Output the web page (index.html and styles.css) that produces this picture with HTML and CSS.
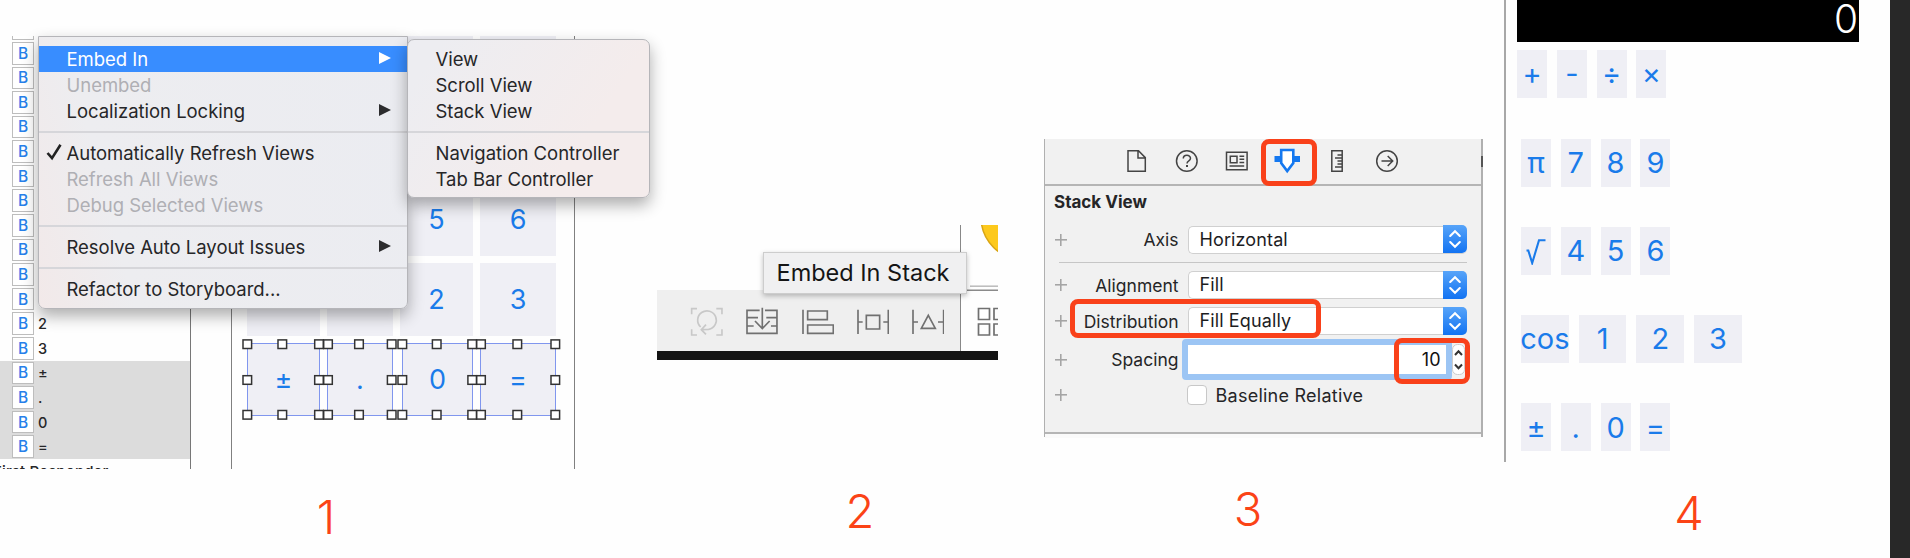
FILE: index.html
```html
<!DOCTYPE html>
<html lang="en">
<head>
<meta charset="utf-8">
<title>Embed In Stack View</title>
<link rel="stylesheet" href="styles.css">
</head>
<body>
<main class="page">
  <section class="step step-one">
    <div class="editor">
      <ul class="outline">
        <li><i>B</i></li><li><i>B</i></li><li><i>B</i></li><li><i>B</i></li><li><i>B</i></li><li><i>B</i></li>
        <li><i>B</i></li><li><i>B</i></li><li><i>B</i></li><li><i>B</i></li><li><i>B</i></li><li><i>B</i></li>
        <li><i>B</i>2</li><li><i>B</i>3</li>
        <li class="picked"><i>B</i>±</li><li class="picked"><i>B</i>.</li><li class="picked"><i>B</i>0</li><li class="picked"><i>B</i>=</li>
        <li class="responder">First Responder</li>
      </ul>
      <div class="canvas">
        <div class="pad">
          <b></b><b></b><b></b><b></b>
          <b></b><b></b><b></b><b></b>
          <b></b><b></b><b>5</b><b>6</b>
          <b>cos</b><b>1</b><b>2</b><b>3</b>
        </div>
        <div class="selection">
          <b class="sel-a">±</b><b class="sel-b">.</b><b class="sel-c">0</b><b class="sel-d">=</b>
          <svg class="handles" width="320" height="84" viewBox="241 338 320 84">
            <defs><rect id="h" x="-4.3" y="-4.3" width="8.6" height="8.6" fill="#fff" stroke="#333" stroke-width="1.5"/>
            <g id="row"><use href="#h" x="247.3"/><use href="#h" x="282.3"/><use href="#h" x="319"/><use href="#h" x="328"/><use href="#h" x="359"/><use href="#h" x="391.7"/><use href="#h" x="402.3"/><use href="#h" x="436.7"/><use href="#h" x="472.2"/><use href="#h" x="481"/><use href="#h" x="517.3"/><use href="#h" x="555.3"/></g>
            <g id="mid"><use href="#h" x="247.3"/><use href="#h" x="319"/><use href="#h" x="328"/><use href="#h" x="391.7"/><use href="#h" x="402.3"/><use href="#h" x="472.2"/><use href="#h" x="481"/><use href="#h" x="555.3"/></g></defs>
            <use href="#row" y="344.2"/><use href="#mid" y="380"/><use href="#row" y="414.8"/>
          </svg>
        </div>
      </div>
      <div class="menu">
        <p class="active">Embed In<em></em></p>
        <p class="off">Unembed</p>
        <p>Localization Locking<em></em></p>
        <hr>
        <p><svg class="check" width="17" height="18" viewBox="0 0 17 18"><path d="M1.5 10 6 15.2 14.5 1.8" fill="none" stroke="#222" stroke-width="2.6"/></svg>Automatically Refresh Views</p>
        <p class="off">Refresh All Views</p>
        <p class="off">Debug Selected Views</p>
        <hr>
        <p>Resolve Auto Layout Issues<em></em></p>
        <hr>
        <p>Refactor to Storyboard...</p>
      </div>
      <div class="menu submenu">
        <p>View</p><p>Scroll View</p><p>Stack View</p>
        <hr>
        <p>Navigation Controller</p><p>Tab Bar Controller</p>
      </div>
    </div>
    <div class="number n1">1</div>
  </section>

  <section class="step step-two">
    <div class="dock">
      <div class="dock-left">
        <div class="tools">
          <svg viewBox="150 290 100 90"><g fill="none" stroke="#c8c8c8" stroke-width="5"><path d="M155 312V295H171M229 295H246V312M155 357V374H171M229 374H246V357"/><path d="M182 350A28 28 0 1 1 206 357L184 358M198 343 184 358 198 372"/></g></svg>
          <svg viewBox="316 290 100 90"><g fill="none" stroke="#707070" stroke-width="5"><path d="M360 300H322V369H412V300H376M322 322H355M380 322H412M322 347H342M394 347H412M368 292V353M346 332 368 355 390 332"/></g></svg>
          <svg viewBox="482 290 100 90"><g fill="none" stroke="#707070" stroke-width="5"><path d="M488 298V371M502 302H561V328H502ZM502 344H579V369H502Z"/></g></svg>
          <svg viewBox="648 290 100 90"><g fill="none" stroke="#707070" stroke-width="5"><path d="M654 298V371M745 298V371M654 335H668M730 335H745M679 315H719V356H679Z"/></g></svg>
          <svg viewBox="814 290 100 90"><g fill="none" stroke="#707070" stroke-width="5"><path d="M820 298V371M912 298V371M820 335H835M895 335H912M866 315 887 354H845Z"/></g></svg>
        </div>
      </div>
      <div class="dock-right">
        <svg width="37" height="126" viewBox="961 225 37 126">
          <circle cx="1024" cy="217" r="43" fill="#fdc91c" stroke="#d9a514" stroke-width="1.5"/>
          <path d="M970 286.2H998" stroke="#bbb" stroke-width="1.5"/><path d="M961 290.3H998" stroke="#8a8a8a" stroke-width="1.5"/>
          <path d="M978.5 308.5h11v11h-11zM994 308.5h11v11h-11zM978.5 324h11v11h-11zM994 324h11v11h-11z" fill="none" stroke="#707070" stroke-width="1.7"/>
        </svg>
      </div>
      <div class="tip">Embed In Stack</div>
    </div>
    <div class="number n2">2</div>
  </section>

  <section class="step step-three">
    <div class="inspector">
      <div class="tabs">
        <svg viewBox="0 0 26 26"><path d="M4 2.8H14.5L21.3 9.6V23.2H4ZM14 3V10H21" fill="none" stroke="#444" stroke-width="1.5"/></svg>
        <svg viewBox="0 0 26 26"><g fill="none" stroke="#444" stroke-width="1.5"><circle cx="12.8" cy="13" r="10.3"/><path d="M9.3 10.5C9.3 6.3 16.5 6.3 16.5 10.3 16.5 13 13 12.6 13 15.5"/><path d="M13 17V19" stroke-width="2"/></g></svg>
        <svg viewBox="0 0 26 26"><path d="M2.5 4.3H23.1V21.7H2.5ZM6.3 8.3H13V14.7H6.3ZM15.5 8.3H20.2M15.5 11.3H20.2M15.5 14.5H20.2M5.5 18H20.2" fill="none" stroke="#444" stroke-width="1.5"/></svg>
        <svg viewBox="0 0 26 26"><path d="M7.2 2H19.3V15L13.2 23 7.2 15Z" fill="#fff" stroke="#1478f0" stroke-width="2.6"/><path d="M.5 8H6.5V14H.5ZM20 8H26V14H20Z" fill="#1478f0"/></svg>
        <svg viewBox="0 0 26 26"><path d="M7.8 2.8H18.2V23.2H7.8ZM13.5 7H18M11 10H18M13.5 13H18M13.5 16H18M11 19H18" fill="none" stroke="#444" stroke-width="1.5"/></svg>
        <svg viewBox="0 0 26 26"><g fill="none" stroke="#444" stroke-width="1.5"><circle cx="13" cy="13" r="10.3"/><path d="M7.5 13H18.5M13.7 8 18.7 13 13.7 18"/></g></svg>
      </div>
      <h2>Stack View</h2>
      <div class="row axis"><s></s><label>Axis</label><div class="select">Horizontal<svg viewBox="0 0 24 28"><path d="M7.2 11 12 6.3 16.8 11M7.2 17 12 21.7 16.8 17"/></svg></div></div>
      <div class="rule"></div>
      <div class="row alignment"><s></s><label>Alignment</label><div class="select">Fill<svg viewBox="0 0 24 28"><path d="M7.2 11 12 6.3 16.8 11M7.2 17 12 21.7 16.8 17"/></svg></div></div>
      <div class="row distribution"><s></s><label>Distribution</label><div class="select">Fill Equally<svg viewBox="0 0 24 28"><path d="M7.2 11 12 6.3 16.8 11M7.2 17 12 21.7 16.8 17"/></svg></div></div>
      <div class="row spacing"><s></s><label>Spacing</label><div class="field">10</div><svg class="stepper" viewBox="0 0 13 32"><rect x=".5" y=".5" width="12" height="30" rx="5" fill="#fff" stroke="#ccc"/><path d="M3 11 6.5 7.2 10 11M3 20.5 6.5 24.3 10 20.5" fill="none" stroke="#333" stroke-width="2"/></svg></div>
      <div class="row relative"><s></s><label></label><span class="box"></span><span class="opt">Baseline Relative</span></div>
      <div class="mark m-tab"></div><div class="mark m-dist"></div><div class="mark m-space"></div>
      <div class="speck"></div>
    </div>
    <div class="number n3">3</div>
  </section>

  <section class="step step-four">
    <div class="phone">
      <div class="display">0</div>
      <div class="keys first"><b>+</b><b>-</b><b>÷</b><b>×</b></div>
      <div class="keys"><b>π</b><b>7</b><b>8</b><b>9</b></div>
      <div class="keys"><b><svg width="22" height="28" viewBox="0 0 22 28"><path d="M1.5 13.5H3.3L7.2 26 14 3.2H20.5" fill="none" stroke="#1a7bea" stroke-width="2.1"/></svg></b><b>4</b><b>5</b><b>6</b></div>
      <div class="keys wide"><b>cos</b><b>1</b><b>2</b><b>3</b></div>
      <div class="keys"><b>±</b><b>.</b><b>0</b><b>=</b></div>
    </div>
    <div class="number n4">4</div>
  </section>
  <aside class="edge"></aside>
</main>
</body>
</html>
```
FILE: styles.css
```css
* { box-sizing: border-box; }
body { margin: 0; background: #fefefe; font-family: Inter, "Liberation Sans", sans-serif; color: #262628; }
.page { display: flex; width: 1910px; height: 558px; overflow: hidden; }
.step { flex: none; height: 558px; }
.number { color: #fb4316; font-size: 47px; line-height: 48px; font-weight: 350; text-align: center; }

/* Step one: outline, canvas and context menus */
.step-one { width: 657px; padding-top: 36px; }
.editor { position: relative; display: flex; gap: 40px; height: 433px; }
.outline { width: 191px; margin: 0; padding: 0; list-style: none; border-right: 1.5px solid #777; overflow: hidden; font-size: 14.5px; font-weight: 500; }
.outline li { display: flex; align-items: center; gap: 4px; height: 24.6px; padding-left: 12px; }
.outline li:first-child { margin-top: -19.7px; }
.outline i { display: flex; align-items: center; justify-content: center; width: 22px; height: 22.6px; border: 1.3px solid #bdbdbd; background: #fff; color: #2680ea; font-style: normal; font-weight: 500; font-size: 15.5px; }
.outline .picked { background: #dcdcdc; }
.outline .responder { padding-left: 0; margin-left: -7px; height: 24px; font-size: 15px; letter-spacing: .15px; white-space: nowrap; }
.canvas { width: 344px; border: solid #808080; border-width: 0 1.3px; overflow: hidden; }
.pad { display: grid; grid-template-columns: 73px 66px 73px 76px; grid-auto-rows: 73px; gap: 7px; margin: -13px 0 0 15px; }
.pad b, .selection b, .keys b { display: flex; align-items: center; justify-content: center; background: #efeff5; color: #1a7bea; font-weight: 400; font-size: 27px; }
.selection { position: relative; display: flex; margin: 7px 0 0 15px; height: 73px; }
.selection b { border: 1.3px solid #8096ee; }
.sel-a { width: 73px; margin-right: 7px; }
.sel-b { width: 66px; margin-right: 9px; }
.sel-c { width: 71px; margin-right: 7px; }
.sel-d { width: 76px; }
.handles { position: absolute; left: -6px; top: -5px; }
.menu { position: absolute; left: 38px; top: 0; width: 370px; height: 273px; padding-top: 8.5px; border: solid #b5b5b9; border-width: 1px; border-radius: 0 0 7px 7px; background: linear-gradient(75deg, #f2e9e9 0, #ededf0 22%, #ebecf1 100%); box-shadow: 0 7px 16px rgba(0,0,0,.32); font-size: 18.5px; letter-spacing: -.03px; }
.menu p { position: relative; display: flex; align-items: center; height: 26px; margin: 0; padding-left: 27.5px; white-space: nowrap; }
.menu hr { height: 2px; margin: 7px 0 7.2px; border: 0; background: #d6d6da; }
.menu .off { color: #afafb4; }
.menu .active { background: #388dff; color: #fff; }
.menu em { position: absolute; right: 16px; top: 6.5px; border: solid transparent; border-width: 6.5px 0 6.5px 12.5px; border-left-color: #2c2c2e; }
.menu .active em { border-left-color: #fff; }
.check { position: absolute; left: 7px; top: 3px; }
.submenu { left: 407px; top: 3px; width: 243px; height: 159px; padding-top: 5.5px; border-radius: 7px; background: linear-gradient(125deg, #ededf1 10%, #f4ecec 70%); }

/* Step two: canvas toolbar */
.step-two { width: 387px; padding-top: 225px; }
.dock { position: relative; display: flex; width: 341px; height: 135px; border-bottom: 9px solid #141414; }
.dock-left { display: flex; width: 304px; padding-top: 65px; border-right: 1.5px solid #888; }
.tools { display: flex; gap: 22px; width: 303px; padding: 16.7px 0 0 33px; background: #efefef; }
.tools svg { flex: none; width: 33.3px; height: 30px; }
.dock-right { width: 37px; }
.dock-right svg { display: block; }
.tip { position: absolute; left: 106px; top: 27px; width: 204px; height: 42px; padding-left: 12.5px; line-height: 39px; background: #f0f0f1; border: 1px solid #cdcdcd; box-shadow: 0 2px 5px rgba(0,0,0,.25); font-size: 23.5px; color: #151515; white-space: nowrap; }

/* Step three: attributes inspector */
.step-three { width: 460px; padding-top: 139px; }
.inspector { position: relative; width: 439px; height: 298px; background: #f1f1f1; border: solid #b0b0b0; border-width: 0 2px 0 1.5px; font-size: 17.5px; color: #252527; }
.inspector::after { content: ""; display: block; height: 4px; border-top: 2px solid #b5b5b5; background: #fafafa; margin-top: 27px; }
.tabs { display: flex; gap: 24.2px; height: 47px; padding: 9px 0 0 78.5px; border-bottom: 2px solid #b5b5b5; }
.tabs svg { flex: none; width: 26px; height: 26px; }
h2 { margin: 5px 0 11.5px 9px; height: 23px; line-height: 23px; font-size: 17px; font-weight: 700; }
.row { display: flex; align-items: center; height: 28px; padding-left: 10px; }
.row s { flex: none; width: 12px; height: 12px; background: linear-gradient(#a5a5a5,#a5a5a5) center/12px 1.6px no-repeat, linear-gradient(#a5a5a5,#a5a5a5) center/1.6px 12px no-repeat; }
.row label { width: 111.5px; text-align: right; margin-right: 9px; white-space: nowrap; }
.select { display: flex; align-items: center; justify-content: space-between; width: 279px; height: 28px; padding: 0 0 1px 11px; background: #fff; border: 1px solid #d0d0d0; border-right: 0; border-radius: 5px; white-space: nowrap; color: #1d1d1f; font-size: 18px; letter-spacing: .12px; }
.select svg { width: 24px; height: 28px; border-radius: 0 5px 5px 0; background: linear-gradient(#57a4f9, #1273f2); fill: none; stroke: #fff; stroke-width: 2.1; stroke-linecap: round; }
.rule { height: 1.5px; margin: 8px 14px 8px; background: #c6c6c6; }
.distribution { margin-top: 8px; }
.spacing { height: 41px; margin-top: 4px; }
.spacing label { margin-right: 3px; }
.field { width: 270px; height: 41px; padding-right: 5px; border: 6px solid #9cc5f4; border-radius: 4px; background: #fff; text-align: right; font-size: 18px; line-height: 30px; color: #111; }
.stepper { width: 13px; height: 32px; }
.relative { height: 20px; margin-top: 5px; }
.box { width: 20px; height: 20px; margin-left: -1px; border: 1.5px solid #c8c8c8; border-radius: 4px; background: #fff; }
.opt { margin-left: 9px; white-space: nowrap; font-size: 18px; letter-spacing: .25px; }
.mark { position: absolute; border: 5px solid #f9411a; border-radius: 8px; }
.m-tab { left: 215.5px; top: 0; width: 56px; height: 47px; }
.m-dist { left: 24.5px; top: 160px; width: 251px; height: 39px; }
.m-space { left: 348.5px; top: 199px; width: 76px; height: 46px; }
.speck { position: absolute; right: -2px; top: 17px; width: 2px; height: 11px; background: #555; }

/* Step four: resulting layout */
.step-four { width: 386px; }
.phone { height: 462px; border-left: 2px solid #a8a8a8; padding-left: 11px; }
.display { width: 342px; height: 42px; background: #000; color: #fff; font-size: 39px; font-weight: 300; line-height: 37px; text-align: right; padding-right: 1px; }
.keys { display: flex; gap: 9.8px; height: 48px; margin: 40.2px 0 0 4px; }
.keys.first { margin: 8px 0 40.5px 0; }
.keys b { width: 30px; font-size: 29px; }
.keys.first b { padding-bottom: 2px; }
.keys.wide { gap: 9.9px; }
.keys.wide b { width: 47.8px; }
.edge { flex: none; width: 20px; background: #282828; }

.n1 { margin: 24px 0 0 -5px; }
.n2 { width: 300px; margin: 126.5px 0 0 53px; }
.n3 { width: 300px; margin: 48px 0 0 54px; }
.n4 { width: 300px; margin: 27px 0 0 35px; }
```
